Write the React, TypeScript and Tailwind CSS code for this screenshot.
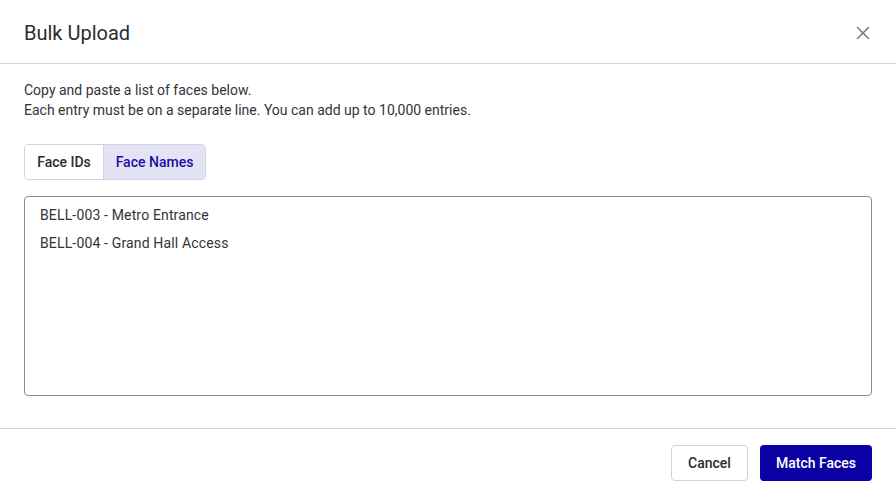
import { X } from 'lucide-react'

export default function App() {
  return (
    <div className="h-[497px] w-[896px] bg-white font-['Roboto',sans-serif] text-[#2b2b33] flex flex-col">
      <header className="h-[64px] border-b border-[#d3d2da] px-6 pt-[2px] flex items-center justify-between">
        <h2 className="text-[20px] text-[#2b2b33]">Bulk Upload</h2>
        <button className="text-[#7b7a8e] -mr-[2px]">
          <X size={22} strokeWidth={1.75} />
        </button>
      </header>

      <section className="px-6 pt-[16px] flex-1">
        <p className="text-[14px] leading-[20px] text-[#33333b]">
          Copy and paste a list of faces below.
          <br />
          Each entry must be on a separate line. You can add up to 10,000 entries.
        </p>

        <div className="mt-[24px] inline-flex h-[36px] rounded-[4px] border border-[#d3d2da] overflow-hidden text-[14px] font-medium whitespace-nowrap">
          <button className="w-[78px] text-[#2b2b33] bg-white">Face IDs</button>
          <button className="w-[102px] border-l border-[#d3d2da] bg-[#e4e3f5] text-[#1a0fa3]">Face Names</button>
        </div>

        <div className="mt-[16px] h-[200px] rounded-[4px] border border-[#8b8a98] px-[15px] pt-[4px] text-[14px] tracking-[0.15px] leading-[28px] text-[#33333b]">
          <div>BELL-003 - Metro Entrance</div>
          <div>BELL-004 - Grand Hall Access</div>
        </div>
      </section>

      <footer className="h-[69px] border-t border-[#d3d2da] px-6 flex items-center justify-end gap-3">
        <button className="h-[36px] w-[77px] rounded-[4px] border border-[#d3d2da] bg-white text-[14px] font-medium text-[#2b2b33]">
          Cancel
        </button>
        <button className="h-[36px] w-[112px] rounded-[4px] bg-[#0a00a3] text-[14px] font-medium text-white">
          Match Faces
        </button>
      </footer>
    </div>
  )
}
